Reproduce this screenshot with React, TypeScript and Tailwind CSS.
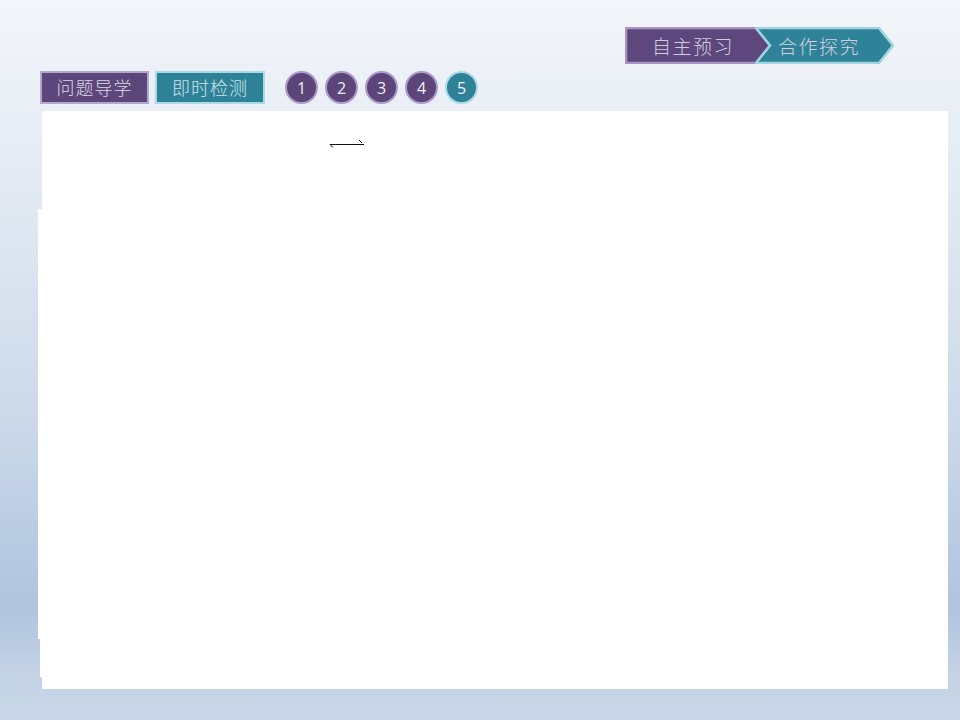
import React from "react";

const cjk = "font-['Noto_Sans_CJK_SC','Noto_Sans',sans-serif] font-light";

// chevron tab behind a label; notch = cut on the left side
function Tab({
  label,
  width,
  fill,
  edge,
  notch,
  className,
}: {
  label: string;
  width: number;
  fill: string;
  edge: string;
  notch?: boolean;
  className?: string;
}) {
  const h = 37;
  const tip = 15;
  const pts = notch
    ? `1,1 ${width - tip},1 ${width - 1},${h / 2} ${width - tip},${h - 1} 1,${h - 1} ${tip},${h / 2}`
    : `1,1 ${width - tip},1 ${width - 1},${h / 2} ${width - tip},${h - 1} 1,${h - 1}`;
  return (
    <div className={`relative h-[37px] flex items-center ${className ?? ""}`} style={{ width }}>
      <svg className="absolute inset-0" width={width} height={h}>
        <polygon points={pts} fill={fill} stroke={edge} strokeWidth={2.5} strokeLinejoin="miter" />
      </svg>
      <span className={`relative text-[19px] leading-none text-[#d3cde0] tracking-[1.5px] ${cjk} ${notch ? "pl-[23px]" : "pl-[27px]"}`}>
        {label}
      </span>
    </div>
  );
}

function Step({ n, active }: { n: number; active?: boolean }) {
  return (
    <div
      className={`w-[33px] h-[33px] rounded-full border-[2.5px] flex items-center justify-center text-[16px] text-[#f1eef6] font-['Open_Sans','Liberation_Sans',sans-serif] ${
        active ? "bg-[#2f8197] border-[#a9dbe5]" : "bg-[#5b4579] border-[#ae9bc9]"
      }`}
    >
      {n}
    </div>
  );
}

export default function App() {
  return (
    <div className="w-[960px] h-[720px] overflow-hidden bg-[linear-gradient(180deg,#f3f6fa_0%,#e3eaf3_25%,#cfdbea_55%,#b0c4de_84%,#c2d1e4_93%,#c9d7e8_100%)]">
      {/* top nav: 自主预习 → 合作探究 */}
      <div className="flex justify-end pt-[27px] pr-[66px]">
        <Tab label="自主预习" width={146} fill="#5d477c" edge="#a893c3" />
        <Tab label="合作探究" width={139} fill="#2f8399" edge="#9fd5e1" notch className="-ml-[16px]" />
      </div>

      {/* buttons + numbered steps */}
      <div className="flex items-center pl-[40px] mt-[7px] h-[33px]">
        <div className={`w-[109px] h-[33px] flex items-center justify-center bg-[#5c477b] border-[2.5px] border-[#b6a7cf] text-[18px] tracking-[1px] text-[#dcd6e6] ${cjk}`}>
          问题导学
        </div>
        <div className={`ml-[6px] w-[110px] h-[33px] flex items-center justify-center bg-[#2e8298] border-[2.5px] border-[#a9dbe6] text-[18px] tracking-[1px] text-[#cfe3ea] ${cjk}`}>
          即时检测
        </div>
        <div className="ml-[20px] flex gap-[7px]">
          <Step n={1} />
          <Step n={2} />
          <Step n={3} />
          <Step n={4} />
          <Step n={5} active />
        </div>
      </div>

      {/* content sheet */}
      <div className="flex mt-[7px] ml-[38px] h-[578px]">
        <div className="w-[4px] flex flex-col">
          <div className="h-[98px]" />
          <div className="h-[430px] bg-white" />
          <div className="h-[38px] flex">
            <div className="w-[2px]" />
            <div className="w-[2px] bg-white" />
          </div>
        </div>
        <div className="w-[906px] bg-white relative">
          <svg className="absolute left-[286px] top-[27px]" width="38" height="12" viewBox="0 0 38 12">
            <line x1="2" y1="6.5" x2="36" y2="6.5" stroke="#111" strokeWidth="1" />
            <line x1="2" y1="6.5" x2="5" y2="9.5" stroke="#111" strokeWidth="1" />
            <line x1="31" y1="2" x2="34" y2="5" stroke="#111" strokeWidth="1" />
          </svg>
        </div>
      </div>
    </div>
  );
}
